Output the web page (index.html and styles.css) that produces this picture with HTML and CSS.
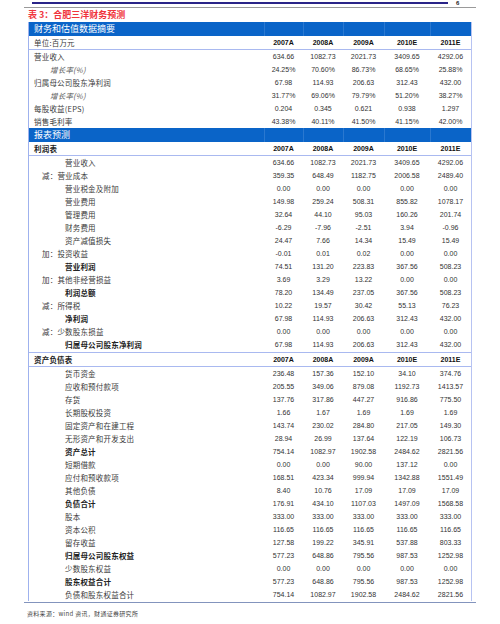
FILE: index.html
```html
<!DOCTYPE html>
<html lang="zh">
<head>
<meta charset="utf-8">
<link rel="stylesheet" href="styles.css">
</head>
<body>
<div class="top">
  <div class="rule-dark"></div>
  <span class="pageno">6</span>
</div>
<div class="rule-gray"></div>
<div class="title">表 3：合肥三洋财务预测</div>
<div class="tbl">
  <div class="bar"><span class="l">财务和估值数据摘要</span><span></span><span></span><span></span><span></span><span></span></div>
  <div class="r hd sep"><span class="l">单位:百万元</span><span>2007A</span><span>2008A</span><span>2009A</span><span>2010E</span><span>2011E</span></div>
  <div class="r"><span class="l">营业收入</span><span>634.66</span><span>1082.73</span><span>2021.73</span><span>3409.65</span><span>4292.06</span></div>
  <div class="r"><span class="l it">增长率(%)</span><span>24.25%</span><span>70.60%</span><span>86.73%</span><span>68.65%</span><span>25.88%</span></div>
  <div class="r"><span class="l">归属母公司股东净利润</span><span>67.98</span><span>114.93</span><span>206.63</span><span>312.43</span><span>432.00</span></div>
  <div class="r"><span class="l it">增长率(%)</span><span>31.77%</span><span>69.06%</span><span>79.79%</span><span>51.20%</span><span>38.27%</span></div>
  <div class="r"><span class="l">每股收益(EPS)</span><span>0.204</span><span>0.345</span><span>0.621</span><span>0.938</span><span>1.297</span></div>
  <div class="r"><span class="l">销售毛利率</span><span>43.38%</span><span>40.11%</span><span>41.50%</span><span>41.15%</span><span>42.00%</span></div>
  <div class="bar"><span class="l">报表预测</span><span></span><span></span><span></span><span></span><span></span></div>
  <div class="r hd sep"><span class="l b">利润表</span><span>2007A</span><span>2008A</span><span>2009A</span><span>2010E</span><span>2011E</span></div>
  <div class="r"><span class="l sub">营业收入</span><span>634.66</span><span>1082.73</span><span>2021.73</span><span>3409.65</span><span>4292.06</span></div>
  <div class="r"><span class="l op">减：营业成本</span><span>359.35</span><span>648.49</span><span>1182.75</span><span>2006.58</span><span>2489.40</span></div>
  <div class="r"><span class="l sub">营业税金及附加</span><span>0.00</span><span>0.00</span><span>0.00</span><span>0.00</span><span>0.00</span></div>
  <div class="r"><span class="l sub">营业费用</span><span>149.98</span><span>259.24</span><span>508.31</span><span>855.82</span><span>1078.17</span></div>
  <div class="r"><span class="l sub">管理费用</span><span>32.64</span><span>44.10</span><span>95.03</span><span>160.26</span><span>201.74</span></div>
  <div class="r"><span class="l sub">财务费用</span><span>-6.29</span><span>-7.96</span><span>-2.51</span><span>3.94</span><span>-0.96</span></div>
  <div class="r"><span class="l sub">资产减值损失</span><span>24.47</span><span>7.66</span><span>14.34</span><span>15.49</span><span>15.49</span></div>
  <div class="r"><span class="l op">加：投资收益</span><span>-0.01</span><span>0.01</span><span>0.02</span><span>0.00</span><span>0.00</span></div>
  <div class="r"><span class="l sub b">营业利润</span><span>74.51</span><span>131.20</span><span>223.83</span><span>367.56</span><span>508.23</span></div>
  <div class="r"><span class="l op">加：其他非经营损益</span><span>3.69</span><span>3.29</span><span>13.22</span><span>0.00</span><span>0.00</span></div>
  <div class="r"><span class="l sub b">利润总额</span><span>78.20</span><span>134.49</span><span>237.05</span><span>367.56</span><span>508.23</span></div>
  <div class="r"><span class="l op">减：所得税</span><span>10.22</span><span>19.57</span><span>30.42</span><span>55.13</span><span>76.23</span></div>
  <div class="r"><span class="l sub b">净利润</span><span>67.98</span><span>114.93</span><span>206.63</span><span>312.43</span><span>432.00</span></div>
  <div class="r"><span class="l op">减：少数股东损益</span><span>0.00</span><span>0.00</span><span>0.00</span><span>0.00</span><span>0.00</span></div>
  <div class="r"><span class="l sub b">归属母公司股东净利润</span><span>67.98</span><span>114.93</span><span>206.63</span><span>312.43</span><span>432.00</span></div>
  <div class="r hd sep sept"><span class="l b">资产负债表</span><span>2007A</span><span>2008A</span><span>2009A</span><span>2010E</span><span>2011E</span></div>
  <div class="r"><span class="l sub">货币资金</span><span>236.48</span><span>157.36</span><span>152.10</span><span>34.10</span><span>374.76</span></div>
  <div class="r"><span class="l sub">应收和预付款项</span><span>205.55</span><span>349.06</span><span>879.08</span><span>1192.73</span><span>1413.57</span></div>
  <div class="r"><span class="l sub">存货</span><span>137.76</span><span>317.86</span><span>447.27</span><span>916.86</span><span>775.50</span></div>
  <div class="r"><span class="l sub">长期股权投资</span><span>1.66</span><span>1.67</span><span>1.69</span><span>1.69</span><span>1.69</span></div>
  <div class="r"><span class="l sub">固定资产和在建工程</span><span>143.74</span><span>230.02</span><span>284.80</span><span>217.05</span><span>149.30</span></div>
  <div class="r"><span class="l sub">无形资产和开发支出</span><span>28.94</span><span>26.99</span><span>137.64</span><span>122.19</span><span>106.73</span></div>
  <div class="r"><span class="l sub b">资产总计</span><span>754.14</span><span>1082.97</span><span>1902.58</span><span>2484.62</span><span>2821.56</span></div>
  <div class="r"><span class="l sub">短期借款</span><span>0.00</span><span>0.00</span><span>90.00</span><span>137.12</span><span>0.00</span></div>
  <div class="r"><span class="l sub">应付和预收款项</span><span>168.51</span><span>423.34</span><span>999.94</span><span>1342.88</span><span>1551.49</span></div>
  <div class="r"><span class="l sub">其他负债</span><span>8.40</span><span>10.76</span><span>17.09</span><span>17.09</span><span>17.09</span></div>
  <div class="r"><span class="l sub b">负债合计</span><span>176.91</span><span>434.10</span><span>1107.03</span><span>1497.09</span><span>1568.58</span></div>
  <div class="r"><span class="l sub">股本</span><span>333.00</span><span>333.00</span><span>333.00</span><span>333.00</span><span>333.00</span></div>
  <div class="r"><span class="l sub">资本公积</span><span>116.65</span><span>116.65</span><span>116.65</span><span>116.65</span><span>116.65</span></div>
  <div class="r"><span class="l sub">留存收益</span><span>127.58</span><span>199.22</span><span>345.91</span><span>537.88</span><span>803.33</span></div>
  <div class="r"><span class="l sub b">归属母公司股东权益</span><span>577.23</span><span>648.86</span><span>795.56</span><span>987.53</span><span>1252.98</span></div>
  <div class="r"><span class="l sub">少数股东权益</span><span>0.00</span><span>0.00</span><span>0.00</span><span>0.00</span><span>0.00</span></div>
  <div class="r"><span class="l sub b">股东权益合计</span><span>577.23</span><span>648.86</span><span>795.56</span><span>987.53</span><span>1252.98</span></div>
  <div class="r"><span class="l sub">负债和股东权益合计</span><span>754.14</span><span>1082.97</span><span>1902.58</span><span>2484.62</span><span>2821.56</span></div>
</div>
<div class="rule-bottom"></div>
<div class="source">资料来源：wind 资讯，财通证券研究所</div>
</body>
</html>
```

FILE: styles.css
```css
html, body {
  margin: 0;
  padding: 0;
  background: #ffffff;
}
body {
  width: 500px;
  height: 624px;
  overflow: hidden;
  font-family: "Noto Sans CJK SC", "Liberation Sans", sans-serif;
  color: #333333;
}
.top {
  display: flex;
  align-items: flex-start;
  height: 7px;
  padding-left: 32px;
}
.rule-dark {
  width: 416px;
  margin-top: 2px;
  height: 2px;
  background: #2a2488;
}
.pageno {
  margin-left: 8px;
  font-family: "Liberation Sans", sans-serif;
  font-weight: bold;
  font-size: 6px;
  line-height: 6px;
  color: #222;
}
.rule-gray {
  margin: 0 24px;
  height: 1px;
  background: #9a9a9a;
}
.title {
  height: 14px;
  line-height: 14px;
  padding-left: 28px;
  font-size: 9px;
  font-weight: bold;
  color: #f0343c;
}
.tbl {
  margin-left: 28px;
  width: 442px;
  border-left: 1px solid #9fb2ee;
  border-right: 1px solid #b7c3f2;
}
.r, .bar {
  display: grid;
  grid-template-columns: 235px 39px 40px 41px 46px 41px;
}
.r {
  height: 13px;
  line-height: 13px;
  font-family: "Liberation Sans", sans-serif;
  font-size: 7px;
  color: #333;
}
.r span {
  text-align: center;
  white-space: nowrap;
}
.r .l {
  text-align: left;
  padding-left: 5px;
  font-family: "Noto Sans CJK SC", sans-serif;
  font-size: 7.5px;
  letter-spacing: 0.2px;
  color: #3a3a3a;
}
.r .sub {
  padding-left: 36px;
}
.r .op {
  padding-left: 13px;
}
.r .it {
  padding-left: 21px;
  font-style: italic;
  color: #555;
}
.r .b {
  font-weight: bold;
  color: #222;
}
.hd span {
  font-weight: bold;
  color: #111;
}
.hd .l {
  font-weight: normal;
}
.hd .l.b {
  font-weight: bold;
}
.sep {
  border-bottom: 1px solid #a9b9f0;
}
.sept {
  margin-top: 1px;
  border-top: 1px solid #a9b9f0;
}
.bar {
  height: 14px;
  line-height: 14px;
  background: #0a64c8;
}
.bar span + span {
  border-left: 1px solid #2a78d0;
}
.bar .l {
  padding-left: 5px;
  font-size: 9px;
  color: #ffffff;
}
.rule-bottom {
  margin: 1px 24px 0;
  height: 1px;
  background: #8394bd;
}
.source {
  padding-left: 27px;
  margin-top: 6px;
  font-size: 6px;
  line-height: 9px;
  letter-spacing: 0.3px;
  color: #444;
}
```
